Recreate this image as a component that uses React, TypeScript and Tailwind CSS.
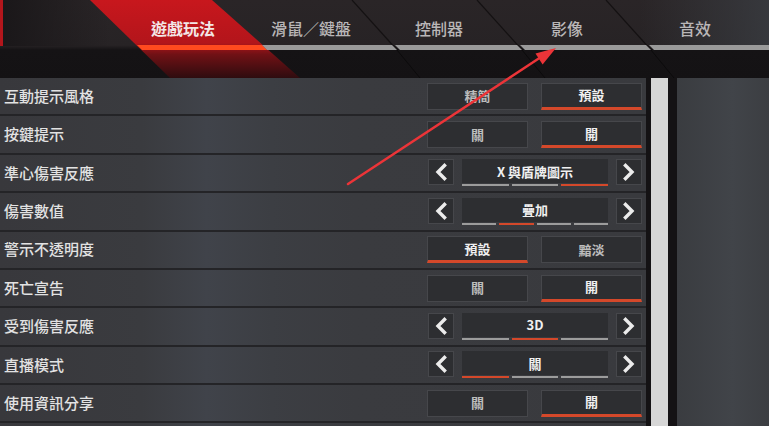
import React from "react";

// Apex-style gameplay settings screen: tab header, setting rows, scrollbar.

type Toggle = { kind: "toggle"; options: [string, string]; active: 0 | 1 };
type Cycle = { kind: "cycle"; value: string; count: number; active: number };
type Row = { label: string; control: Toggle | Cycle };

const rows: Row[] = [
  { label: "互動提示風格", control: { kind: "toggle", options: ["精簡", "預設"], active: 1 } },
  { label: "按鍵提示", control: { kind: "toggle", options: ["關", "開"], active: 1 } },
  { label: "準心傷害反應", control: { kind: "cycle", value: "X 與盾牌圖示", count: 3, active: 2 } },
  { label: "傷害數值", control: { kind: "cycle", value: "疊加", count: 4, active: 1 } },
  { label: "警示不透明度", control: { kind: "toggle", options: ["預設", "黯淡"], active: 0 } },
  { label: "死亡宣告", control: { kind: "toggle", options: ["關", "開"], active: 1 } },
  { label: "受到傷害反應", control: { kind: "cycle", value: "3D", count: 3, active: 1 } },
  { label: "直播模式", control: { kind: "cycle", value: "關", count: 3, active: 0 } },
  { label: "使用資訊分享", control: { kind: "toggle", options: ["關", "開"], active: 1 } },
];

const tabs = ["遊戲玩法", "滑鼠／鍵盤", "控制器", "影像", "音效"];

function Chevron({ dir }: { dir: "left" | "right" }) {
  return (
    <svg width="12" height="18" viewBox="0 0 12 18" aria-hidden>
      <polyline
        points={dir === "left" ? "9.5,2.5 3,9 9.5,15.5" : "2.5,2.5 9,9 2.5,15.5"}
        fill="none"
        stroke="#ececec"
        strokeWidth="3.4"
        strokeLinecap="square"
      />
    </svg>
  );
}

function ToggleControl({ c }: { c: Toggle }) {
  return (
    <div className="flex gap-[13px]">
      {c.options.map((o, i) => (
        <div
          key={o}
          className={
            "w-[101px] h-[27px] flex items-center justify-center bg-[#2d2e31] border border-[#46474b] text-[13px] font-bold " +
            (i === c.active
              ? "border-b-[3px] border-b-[#d4482a] text-[#f0f0f0]"
              : "text-[#bdbdbd]")
          }
        >
          {o}
        </div>
      ))}
    </div>
  );
}

function CycleControl({ c }: { c: Cycle }) {
  return (
    <div className="flex items-start gap-[8px]">
      <div className="w-[26px] h-[26px] flex items-center justify-center bg-[#2d2e31] border border-[#46474b]">
        <Chevron dir="left" />
      </div>
      <div className="w-[146px] flex flex-col">
        <div className="h-[24px] flex items-center justify-center bg-[#2d2e31] text-[13px] font-bold text-[#f0f0f0]">
          {c.value}
        </div>
        <div className="flex gap-[3px] mt-[1px]">
          {Array.from({ length: c.count }).map((_, i) => (
            <div
              key={i}
              className={"flex-1 h-[2px] " + (i === c.active ? "bg-[#d4482a]" : "bg-[#9c9c9c]")}
            />
          ))}
        </div>
      </div>
      <div className="w-[26px] h-[26px] flex items-center justify-center bg-[#2d2e31] border border-[#46474b]">
        <Chevron dir="right" />
      </div>
    </div>
  );
}

function Header() {
  return (
    <div className="relative h-[78px] bg-[linear-gradient(180deg,#2a2527_0%,#272325_58%,#151315_64%,#141214_100%)]">
      <svg className="absolute inset-0" width="769" height="78" aria-hidden>
        <defs>
          <linearGradient id="redTab" x1="0" y1="0" x2="0" y2="1">
            <stop offset="0" stopColor="#c8171d" />
            <stop offset="0.55" stopColor="#b3151b" />
            <stop offset="0.7" stopColor="#701115" />
            <stop offset="1" stopColor="#2e0c0f" />
          </linearGradient>
          <linearGradient id="sideGlow" x1="0" y1="0" x2="1" y2="0">
            <stop offset="0" stopColor="#1a1719" />
            <stop offset="1" stopColor="#1a1719" stopOpacity="0" />
          </linearGradient>
          <linearGradient id="rightGlow" x1="0" y1="0" x2="1" y2="0">
            <stop offset="0" stopColor="#3a3d42" stopOpacity="0" />
            <stop offset="1" stopColor="#3a3d42" stopOpacity="0.8" />
          </linearGradient>
        </defs>
        <rect x="0" y="0" width="110" height="46" fill="url(#sideGlow)" />
        <rect x="640" y="0" width="129" height="46" fill="url(#rightGlow)" />
        <rect x="0" y="0" width="3" height="46" fill="#b3161c" />
        <polygon points="90,0 212,0 300,78 170,78" fill="url(#redTab)" />
        {/* slanted tab dividers */}
        <line x1="352" y1="0" x2="397" y2="50" stroke="#141112" strokeWidth="1.2" />
        <line x1="477" y1="0" x2="522" y2="50" stroke="#141112" strokeWidth="1.2" />
        <line x1="606" y1="0" x2="651" y2="50" stroke="#141112" strokeWidth="1.2" />
        <line x1="397" y1="50" x2="420" y2="78" stroke="#0c0b0c" strokeWidth="1" />
        <line x1="522" y1="50" x2="545" y2="78" stroke="#0c0b0c" strokeWidth="1" />
        <line x1="651" y1="50" x2="674" y2="78" stroke="#0c0b0c" strokeWidth="1" />
        {/* underline bar */}
        <polygon points="137,45 262,45 267,50 142,50" fill="#ff4a1f" />
        <polygon points="262,45 392,45 397,50 267,50" fill="#9a9a9a" />
        <polygon points="395,45 517,45 522,50 400,50" fill="#9a9a9a" />
        <polygon points="520,45 646,45 651,50 525,50" fill="#9a9a9a" />
        <polygon points="649,45 769,45 769,50 654,50" fill="#9a9a9a" />
      </svg>
      <div className="relative flex pl-[119px] pt-[17px]">
        {tabs.map((t, i) => (
          <div
            key={t}
            className={
              "w-[128px] text-center text-[16px] leading-[22px] " +
              (i === 0 ? "text-[#f3e6e6] font-bold" : "text-[#b9b6b7] font-medium")
            }
          >
            {t}
          </div>
        ))}
      </div>
    </div>
  );
}

export default function App() {
  return (
    <div className="relative w-[769px] h-[426px] overflow-hidden bg-[#141214] font-['Noto_Sans_CJK_TC','Noto_Sans_CJK_SC',sans-serif]">
      <Header />
      <div className="flex h-[348px]">
        <div className="relative w-[646px] bg-[linear-gradient(90deg,#38383c_0%,#3a3b3f_22%,#40434a_32%,#3c3e43_42%,#3a3b3f_55%,#393a3e_100%)]">
          {rows.map((r) => (
            <div
              key={r.label}
              className="h-[38.375px] flex items-center justify-between pl-[4px] pr-[4px] border-b-2 border-[#242427]"
            >
              <span className="text-[15px] text-[#e2e2e2] font-medium">{r.label}</span>
              {r.control.kind === "toggle" ? (
                <ToggleControl c={r.control} />
              ) : (
                <CycleControl c={r.control} />
              )}
            </div>
          ))}
        </div>
        <div className="w-[5px]" />
        <div className="w-[17px] bg-[#d6d6d6]" />
        <div className="w-[9px]" />
        <div className="flex-1 bg-[linear-gradient(90deg,#3a3c40,#414449_60%,#3c3e42)]" />
      </div>

      {/* red annotation arrow drawn over the screenshot */}
      <svg className="absolute inset-0 pointer-events-none" width="769" height="426" aria-hidden>
        <line x1="348" y1="184" x2="541" y2="57" stroke="#ec3438" strokeWidth="2.5" strokeLinecap="round" />
        <polygon points="556,48 542.6,64.5 535.5,53.5" fill="#ec3438" />
      </svg>
    </div>
  );
}
